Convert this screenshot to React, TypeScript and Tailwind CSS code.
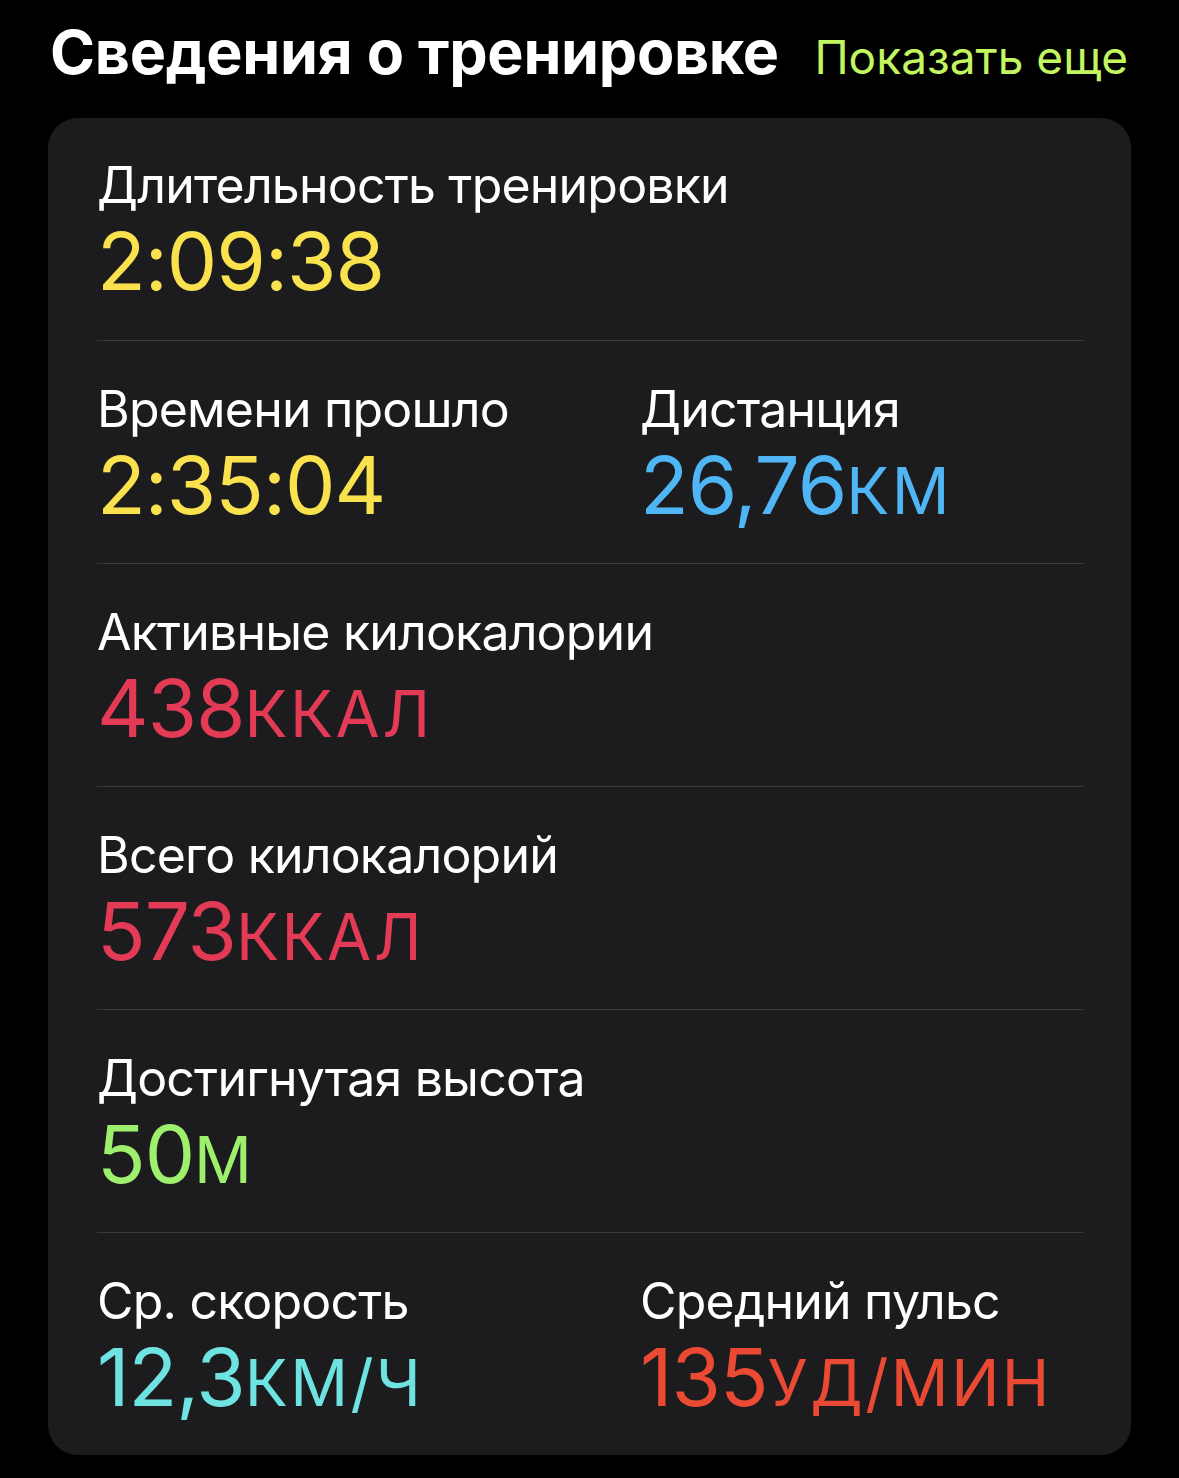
import React from "react";

type Metric = { label: string; num: string; unit: string; color: string };

const Value = ({ m }: { m: Metric }) => (
  <div className="flex flex-col">
    <div className="text-[50px] leading-[64px] text-white tracking-[-0.8px] whitespace-nowrap">{m.label}</div>
    <div className={`text-[80px] leading-[88px] tracking-[-1px] whitespace-nowrap ${m.color}`}>
      {m.num}
      {m.unit ? <span className="text-[64px] leading-none uppercase tracking-[2.5px]">{m.unit}</span> : null}
    </div>
  </div>
);

const Divider = () => <div className="h-px bg-[#3a3a3c]" />;

export default function App() {
  return (
    <div
      className="min-h-[1478px] w-[1179px] bg-black"
      style={{ fontFamily: "Inter, 'Noto Sans', sans-serif" }}
    >
      <div className="flex items-baseline justify-between pl-[50px] pr-[51px] pt-[14px] h-[118px]">
        <div className="text-[61px] font-bold leading-[76px] text-white tracking-[-0.3px]">Сведения о тренировке</div>
        <div className="text-[46px] leading-[76px] text-[#c2f55f]">Показать еще</div>
      </div>
      <div className="ml-[48px] w-[1083px] rounded-[30px] bg-[#1c1c1e] pl-[49px] pr-[48px]">
        <div className="pt-[35px] pb-[35px]">
          <Value m={{ label: "Длительность тренировки", num: "2:09:38", unit: "", color: "text-[#f9e24d]" }} />
        </div>
        <Divider />
        <div className="grid grid-cols-[543px_1fr] pt-[36px] pb-[34px]">
          <Value m={{ label: "Времени прошло", num: "2:35:04", unit: "", color: "text-[#f9e24d]" }} />
          <Value m={{ label: "Дистанция", num: "26,76", unit: "км", color: "text-[#4fb5f5]" }} />
        </div>
        <Divider />
        <div className="pt-[36px] pb-[34px]">
          <Value m={{ label: "Активные килокалории", num: "438", unit: "ккал", color: "text-[#e33a55]" }} />
        </div>
        <Divider />
        <div className="pt-[36px] pb-[34px]">
          <Value m={{ label: "Всего килокалорий", num: "573", unit: "ккал", color: "text-[#e33a55]" }} />
        </div>
        <Divider />
        <div className="pt-[36px] pb-[34px]">
          <Value m={{ label: "Достигнутая высота", num: "50", unit: "м", color: "text-[#9ef06c]" }} />
        </div>
        <Divider />
        <div className="grid grid-cols-[543px_1fr] pt-[36px] pb-[34px]">
          <Value m={{ label: "Ср. скорость", num: "12,3", unit: "км/ч", color: "text-[#6fe3e1]" }} />
          <Value m={{ label: "Средний пульс", num: "135", unit: "уд/мин", color: "text-[#ea4a33]" }} />
        </div>
      </div>
    </div>
  );
}
